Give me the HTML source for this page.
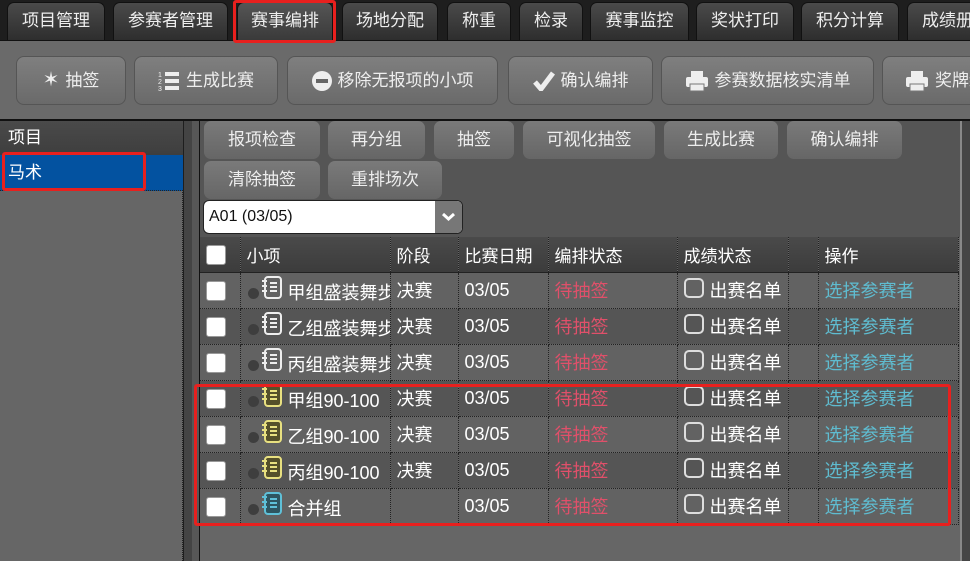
<!DOCTYPE html>
<html><head><meta charset="utf-8"><style>
*{box-sizing:border-box;margin:0;padding:0}
body{width:970px;height:561px;overflow:hidden;background:#1e1e1e;font-family:"Liberation Sans","Noto Sans CJK SC",sans-serif;color:#fff;position:relative}
.a{position:absolute}
.tab{position:absolute;top:2px;height:38px;border:1px solid #111;border-bottom:none;border-radius:7px 7px 0 0;background:linear-gradient(#4a4a4a,#2e2e2e);font-size:17px;line-height:36px;text-align:center;color:#eee}
.tab.on{background:linear-gradient(#555,#3a3a3a)}
.tb{position:absolute;top:56px;height:49px;border:1px solid #555;border-radius:8px;background:linear-gradient(#7f7f7f,#6a6a6a);font-size:17px;line-height:47px;color:#eee;display:flex;align-items:center;justify-content:center;gap:6px}
.sb{position:absolute;height:38px;border-radius:7px;background:linear-gradient(#7a7a7a,#666);font-size:17px;line-height:38px;text-align:center;color:#eee}
.red{position:absolute;border:3px solid #e8201e;border-radius:3px}
table{position:absolute;left:200px;top:237px;border-collapse:collapse;font-size:18px;width:758px;table-layout:fixed}
td{height:36px;border-right:1px dotted #222;border-bottom:1px dotted #222;padding:0 6px;white-space:nowrap;overflow:hidden;vertical-align:middle}
tr.h td{background:linear-gradient(#4a4a4a,#3c3c3c);height:35px;border-bottom:1px solid #222;font-size:17px}
tr.l td{background:#626262}
tr.d td{background:#555}
.cb{display:inline-block;width:20px;height:20px;background:#fff;border-radius:3px;border:1px solid #999;vertical-align:middle}
.ob{display:inline-block;width:20px;height:20px;border:2px solid #ddd;border-radius:5px;vertical-align:-1px;margin-right:6px}
.dot{display:inline-block;width:11px;height:11px;border-radius:50%;background:#3e3e3e;vertical-align:middle;margin-right:2px}
.red2{color:#e0506a}.cy{color:#5fbcd0}
.nb{display:inline-block;vertical-align:-1px;margin-right:5px}
td.s{padding-left:7px}
</style></head><body>
<div class="tab" style="left:7px;width:98px">项目管理</div>
<div class="tab" style="left:113px;width:115px">参赛者管理</div>
<div class="tab on" style="left:237px;width:96px">赛事编排</div>
<div class="tab" style="left:342px;width:96px">场地分配</div>
<div class="tab" style="left:447px;width:64px">称重</div>
<div class="tab" style="left:519px;width:64px">检录</div>
<div class="tab" style="left:590px;width:99px">赛事监控</div>
<div class="tab" style="left:696px;width:98px">奖状打印</div>
<div class="tab" style="left:801px;width:98px">积分计算</div>
<div class="tab" style="left:907px;width:80px;text-align:left;padding-left:14px">成绩册</div>
<div class="a" style="left:0;top:40px;width:970px;height:79px;background:#6a6a6a;border-top:1px solid #111"></div>
<div class="tb" style="left:16px;width:110px"><span style="font-size:20px">✶</span>抽签</div>
<div class="tb" style="left:134px;width:144px"><svg width="22" height="22" viewBox="0 0 22 22"><text x="0" y="7" font-size="7" fill="#eee">1</text><text x="0" y="14" font-size="7" fill="#eee">2</text><text x="0" y="21" font-size="7" fill="#eee">3</text><rect x="7" y="2" width="14" height="4" fill="#eee"/><rect x="7" y="9" width="14" height="4" fill="#eee"/><rect x="7" y="16" width="14" height="4" fill="#eee"/></svg>生成比赛</div>
<div class="tb" style="left:287px;width:211px"><svg width="20" height="20"><circle cx="10" cy="10" r="10" fill="#eee"/><rect x="4" y="8" width="12" height="4" fill="#666"/></svg>移除无报项的小项</div>
<div class="tb" style="left:508px;width:145px"><svg width="22" height="20"><path d="M2 11l6 7L20 2" stroke="#eee" stroke-width="5" fill="none"/></svg>确认编排</div>
<div class="tb" style="left:661px;width:213px"><svg width="24" height="22"><rect x="6" y="1" width="12" height="6" fill="#eee"/><rect x="1" y="7" width="22" height="10" rx="2" fill="#eee"/><rect x="5" y="14" width="14" height="7" fill="#eee" stroke="#777"/></svg>参赛数据核实清单</div>
<div class="tb" style="left:882px;width:120px;justify-content:flex-start;padding-left:22px"><svg width="24" height="22"><rect x="6" y="1" width="12" height="6" fill="#eee"/><rect x="1" y="7" width="22" height="10" rx="2" fill="#eee"/><rect x="5" y="14" width="14" height="7" fill="#eee" stroke="#777"/></svg>奖牌统</div>
<div class="a" style="left:0;top:119px;width:970px;height:2px;background:#111"></div>
<div class="a" style="left:0;top:121px;width:183px;height:440px;background:#666;border-right:1px dotted #222"></div>
<div class="a" style="left:0;top:121px;width:183px;height:34px;background:linear-gradient(#4a4a4a,#3e3e3e);font-size:17px;line-height:34px;padding-left:8px">项目</div>
<div class="a" style="left:0;top:155px;width:183px;height:36px;background:#0352a0;font-size:17px;line-height:36px;padding-left:8px;border-bottom:1px dotted #222">马术</div>
<div class="a" style="left:184px;top:121px;width:8px;height:440px;background:#444"></div>
<div class="a" style="left:192px;top:121px;width:7px;height:440px;background:#575757"></div>
<div class="a" style="left:199px;top:121px;width:1px;height:440px;background:#111"></div>
<div class="a" style="left:200px;top:121px;width:760px;height:116px;background:#555"></div>
<div class="a" style="left:200px;top:237px;width:760px;height:324px;background:#666"></div>
<div class="a" style="left:960px;top:121px;width:2px;height:440px;background:#888"></div>
<div class="a" style="left:962px;top:121px;width:8px;height:440px;background:#454545"></div>
<div class="sb" style="left:204px;top:121px;width:116px">报项检查</div>
<div class="sb" style="left:328px;top:121px;width:97px">再分组</div>
<div class="sb" style="left:434px;top:121px;width:80px">抽签</div>
<div class="sb" style="left:523px;top:121px;width:132px">可视化抽签</div>
<div class="sb" style="left:664px;top:121px;width:114px">生成比赛</div>
<div class="sb" style="left:787px;top:121px;width:115px">确认编排</div>
<div class="sb" style="left:204px;top:161px;width:116px">清除抽签</div>
<div class="sb" style="left:328px;top:161px;width:114px">重排场次</div>
<div class="a" style="left:203px;top:200px;width:260px;height:34px;background:#fff;border:1px solid #222;border-radius:6px;overflow:hidden;color:#111;font-size:16px;line-height:32px;padding-left:5px">A01 (03/05)<div class="a" style="right:0;top:0;width:27px;height:34px;background:#777"><svg width="27" height="32"><path d="M8 13l5.5 5 5.5-5" stroke="#fff" stroke-width="3" fill="none"/></svg></div></div>
<table>
<colgroup><col style="width:40px"><col style="width:150px"><col style="width:68px"><col style="width:90px"><col style="width:129px"><col style="width:111px"><col style="width:30px"><col style="width:140px"></colgroup>
<tr class="h"><td><span class="cb"></span></td><td>小项</td><td>阶段</td><td>比赛日期</td><td>编排状态</td><td>成绩状态</td><td></td><td>操作</td></tr>
<tr class="l"><td><span class="cb"></span></td><td class="s"><span class="dot"></span><svg class="nb" width="22" height="24"><rect x="4" y="1" width="16" height="21" rx="3" fill="none" stroke="#eee" stroke-width="2"/><path d="M1 5h5M1 10h5M1 15h5M9 7h7M9 11h7M9 15h7" stroke="#eee" stroke-width="2"/></svg>甲组盛装舞步</td><td>决赛</td><td>03/05</td><td class="red2">待抽签</td><td><span class="ob"></span>出赛名单</td><td></td><td class="cy">选择参赛者</td></tr>
<tr class="d"><td><span class="cb"></span></td><td class="s"><span class="dot"></span><svg class="nb" width="22" height="24"><rect x="4" y="1" width="16" height="21" rx="3" fill="none" stroke="#eee" stroke-width="2"/><path d="M1 5h5M1 10h5M1 15h5M9 7h7M9 11h7M9 15h7" stroke="#eee" stroke-width="2"/></svg>乙组盛装舞步</td><td>决赛</td><td>03/05</td><td class="red2">待抽签</td><td><span class="ob"></span>出赛名单</td><td></td><td class="cy">选择参赛者</td></tr>
<tr class="l"><td><span class="cb"></span></td><td class="s"><span class="dot"></span><svg class="nb" width="22" height="24"><rect x="4" y="1" width="16" height="21" rx="3" fill="none" stroke="#eee" stroke-width="2"/><path d="M1 5h5M1 10h5M1 15h5M9 7h7M9 11h7M9 15h7" stroke="#eee" stroke-width="2"/></svg>丙组盛装舞步</td><td>决赛</td><td>03/05</td><td class="red2">待抽签</td><td><span class="ob"></span>出赛名单</td><td></td><td class="cy">选择参赛者</td></tr>
<tr class="d"><td><span class="cb"></span></td><td class="s"><span class="dot"></span><svg class="nb" width="22" height="24"><rect x="4" y="1" width="16" height="21" rx="3" fill="#55502a" stroke="#e8e080" stroke-width="2"/><path d="M1 5h5M1 10h5M1 15h5M9 7h7M9 11h7M9 15h7" stroke="#e8e080" stroke-width="2"/></svg>甲组90-100</td><td>决赛</td><td>03/05</td><td class="red2">待抽签</td><td><span class="ob"></span>出赛名单</td><td></td><td class="cy">选择参赛者</td></tr>
<tr class="l"><td><span class="cb"></span></td><td class="s"><span class="dot"></span><svg class="nb" width="22" height="24"><rect x="4" y="1" width="16" height="21" rx="3" fill="#55502a" stroke="#e8e080" stroke-width="2"/><path d="M1 5h5M1 10h5M1 15h5M9 7h7M9 11h7M9 15h7" stroke="#e8e080" stroke-width="2"/></svg>乙组90-100</td><td>决赛</td><td>03/05</td><td class="red2">待抽签</td><td><span class="ob"></span>出赛名单</td><td></td><td class="cy">选择参赛者</td></tr>
<tr class="d"><td><span class="cb"></span></td><td class="s"><span class="dot"></span><svg class="nb" width="22" height="24"><rect x="4" y="1" width="16" height="21" rx="3" fill="#55502a" stroke="#e8e080" stroke-width="2"/><path d="M1 5h5M1 10h5M1 15h5M9 7h7M9 11h7M9 15h7" stroke="#e8e080" stroke-width="2"/></svg>丙组90-100</td><td>决赛</td><td>03/05</td><td class="red2">待抽签</td><td><span class="ob"></span>出赛名单</td><td></td><td class="cy">选择参赛者</td></tr>
<tr class="l"><td><span class="cb"></span></td><td class="s"><span class="dot"></span><svg class="nb" width="22" height="24"><rect x="4" y="1" width="16" height="21" rx="3" fill="#2e5560" stroke="#5fc0d8" stroke-width="2"/><path d="M1 5h5M1 10h5M1 15h5M9 7h7M9 11h7M9 15h7" stroke="#5fc0d8" stroke-width="2"/></svg>合并组</td><td></td><td>03/05</td><td class="red2">待抽签</td><td><span class="ob"></span>出赛名单</td><td></td><td class="cy">选择参赛者</td></tr>
</table>
<div class="red" style="left:233px;top:0;width:103px;height:43px"></div>
<div class="red" style="left:2px;top:152px;width:144px;height:39px"></div>
<div class="red" style="left:194px;top:384px;width:757px;height:142px"></div>
</body></html>
